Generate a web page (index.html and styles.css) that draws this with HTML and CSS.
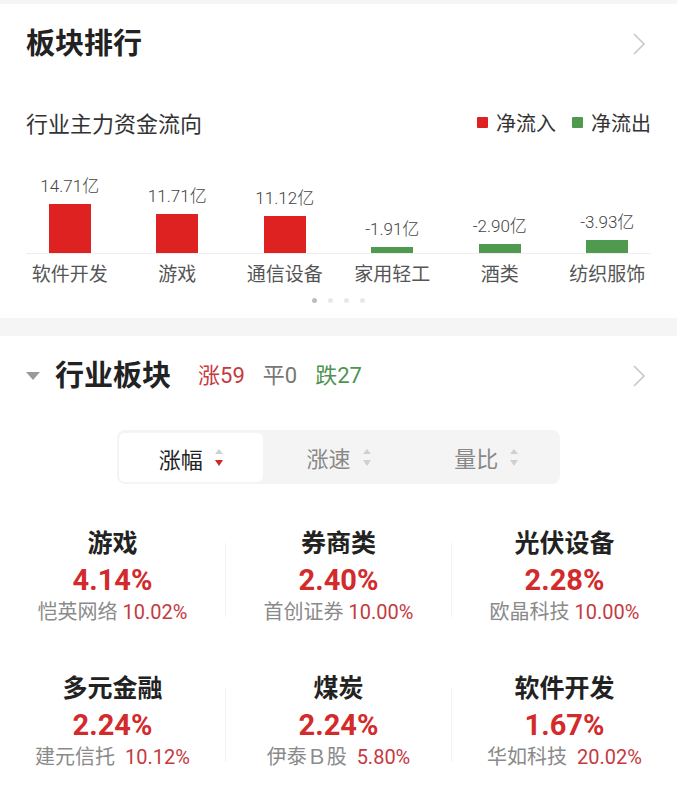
FILE: index.html
```html
<!DOCTYPE html>
<html lang="zh-CN">
<head>
  <meta charset="UTF-8">
  <meta name="viewport" content="width=device-width, initial-scale=1.0">
  <title>板块排行</title>
  <link rel="stylesheet" href="styles.css">
</head>
<body>
  <section class="card rank">
    <div class="card-head">
      <h1 class="title">板块排行</h1>
      <svg class="chevron" width="14" height="24" viewBox="0 0 14 24"><path d="M2 2l10 10-10 10" fill="none" stroke="#c8c8c8" stroke-width="1.6"/></svg>
    </div>

    <div class="flow-head">
      <span class="flow-title">行业主力资金流向</span>
      <div class="legend">
        <span class="legend-item"><i class="swatch red"></i>净流入</span>
        <span class="legend-item"><i class="swatch green"></i>净流出</span>
      </div>
    </div>

    <div class="chart">
      <div class="bars">
        <div class="col"><span class="val">14.71亿</span><i class="bar red" style="height: 49px"></i></div>
        <div class="col"><span class="val">11.71亿</span><i class="bar red" style="height: 39px"></i></div>
        <div class="col"><span class="val">11.12亿</span><i class="bar red" style="height: 37px"></i></div>
        <div class="col"><span class="val">-1.91亿</span><i class="bar green" style="height: 6px"></i></div>
        <div class="col"><span class="val">-2.90亿</span><i class="bar green" style="height: 9px"></i></div>
        <div class="col"><span class="val">-3.93亿</span><i class="bar green" style="height: 13px"></i></div>
      </div>
      <div class="names">
        <span>软件开发</span>
        <span>游戏</span>
        <span>通信设备</span>
        <span>家用轻工</span>
        <span>酒类</span>
        <span>纺织服饰</span>
      </div>
    </div>

    <div class="dots">
      <i class="dot on"></i><i class="dot"></i><i class="dot"></i><i class="dot"></i>
    </div>
  </section>

  <section class="card sectors">
    <div class="card-head">
      <i class="caret"></i>
      <h2 class="title">行业板块</h2>
      <span class="stat up">涨59</span>
      <span class="stat flat">平0</span>
      <span class="stat down">跌27</span>
      <svg class="chevron" width="14" height="24" viewBox="0 0 14 24"><path d="M2 2l10 10-10 10" fill="none" stroke="#c8c8c8" stroke-width="1.6"/></svg>
    </div>

    <div class="tabs">
      <div class="tab active">涨幅
        <svg class="sort" width="8" height="17" viewBox="0 0 8 17"><polygon points="0,5 4,0 8,5" fill="#d0d0d0"/><polygon points="0,11 8,11 4,17" fill="#d42525"/></svg>
      </div>
      <div class="tab">涨速
        <svg class="sort" width="8" height="17" viewBox="0 0 8 17"><polygon points="0,5 4,0 8,5" fill="#d0d0d0"/><polygon points="0,11 8,11 4,17" fill="#d0d0d0"/></svg>
      </div>
      <div class="tab">量比
        <svg class="sort" width="8" height="17" viewBox="0 0 8 17"><polygon points="0,5 4,0 8,5" fill="#d0d0d0"/><polygon points="0,11 8,11 4,17" fill="#d0d0d0"/></svg>
      </div>
    </div>

    <div class="grid">
      <div class="row">
        <div class="cell">
          <div class="name">游戏</div>
          <div class="pct">4.14%</div>
          <div class="lead">恺英网络 <span>10.02%</span></div>
        </div>
        <i class="vline"></i>
        <div class="cell">
          <div class="name">券商类</div>
          <div class="pct">2.40%</div>
          <div class="lead">首创证券 <span>10.00%</span></div>
        </div>
        <i class="vline"></i>
        <div class="cell">
          <div class="name">光伏设备</div>
          <div class="pct">2.28%</div>
          <div class="lead">欧晶科技 <span>10.00%</span></div>
        </div>
      </div>
      <div class="row">
        <div class="cell">
          <div class="name">多元金融</div>
          <div class="pct">2.24%</div>
          <div class="lead">建元信托  <span>10.12%</span></div>
        </div>
        <i class="vline"></i>
        <div class="cell">
          <div class="name">煤炭</div>
          <div class="pct">2.24%</div>
          <div class="lead">伊泰Ｂ股  <span>5.80%</span></div>
        </div>
        <i class="vline"></i>
        <div class="cell">
          <div class="name">软件开发</div>
          <div class="pct">1.67%</div>
          <div class="lead">华如科技  <span>20.02%</span></div>
        </div>
      </div>
    </div>
  </section>
</body>
</html>
```

FILE: styles.css
```css
body {
  margin: 0;
  background: #f5f5f5;
  font-family: Roboto, "Noto Sans CJK SC", sans-serif;
  color: #333;
}
.card {
  background: #fff;
  padding: 22px 0 15px;
}
.rank {
  margin-top: 4px;
}
.sectors {
  margin-top: 18px;
  padding-bottom: 30px;
}
.card-head {
  display: flex;
  align-items: center;
  height: 36px;
  padding: 0 31px 0 26px;
}
.title {
  margin: 0;
  font-size: 29px;
  line-height: 36px;
  font-weight: 700;
  color: #222;
}
.chevron {
  margin-left: auto;
}
.flow-head {
  display: flex;
  align-items: center;
  height: 30px;
  margin-top: 45px;
  padding: 0 26px;
}
.flow-title {
  font-size: 22px;
  color: #333;
}
.legend {
  display: flex;
  gap: 16px;
  margin-left: auto;
}
.legend-item {
  display: flex;
  align-items: center;
  gap: 8px;
  font-size: 20px;
  color: #333;
}
.swatch {
  width: 11px;
  height: 11px;
  border-radius: 1px;
}
.red {
  background: #de2222;
}
.green {
  background: #4f9a4f;
}
.chart {
  margin-top: 38px;
  padding: 0 16px;
}
/* baseline is 10px shorter than the columns on each side */
.bars {
  display: grid;
  grid-template-columns: repeat(6, 1fr);
  align-items: end;
  padding-bottom: 1px;
  background: linear-gradient(#eeeeee, #eeeeee) center bottom / calc(100% - 20px) 1px no-repeat;
}
.bars .col {
  display: flex;
  flex-direction: column;
  align-items: center;
}
.val {
  height: 22px;
  line-height: 22px;
  margin-bottom: 7px;
  font-size: 17px;
  font-weight: 300;
  color: #444;
  white-space: nowrap;
}
.bar {
  display: block;
  width: 42px;
}
.names {
  display: grid;
  grid-template-columns: repeat(6, 1fr);
  margin-top: 8px;
  height: 26px;
  line-height: 26px;
  font-size: 19px;
  color: #555;
  text-align: center;
}
.dots {
  display: flex;
  justify-content: center;
  gap: 11px;
  margin-top: 10px;
}
.dot {
  width: 5px;
  height: 5px;
  border-radius: 50%;
  background: #e8e8e8;
}
.dot.on {
  background: #bdbdbd;
}
.caret {
  width: 0;
  height: 0;
  border-left: 7px solid transparent;
  border-right: 7px solid transparent;
  border-top: 8px solid #9a9a9a;
  margin-right: 15px;
}
.stat {
  font-size: 22px;
  line-height: 36px;
  height: 36px;
  margin-left: 18px;
}
.stat.up {
  margin-left: 27px;
  color: #c43a3e;
}
.stat.flat {
  color: #777;
}
.stat.down {
  color: #4f9452;
}
.tabs {
  display: grid;
  grid-template-columns: repeat(3, 1fr);
  width: 443px;
  height: 54px;
  margin: 36px auto 0;
  background: #f4f4f4;
  border-radius: 8px;
}
.tab {
  display: flex;
  align-items: center;
  justify-content: center;
  gap: 12px;
  font-size: 22px;
  color: #888;
}
.tab.active {
  margin: 3px 2px 2px 2px;
  background: #fff;
  border-radius: 6px;
  color: #222;
}
.grid {
  margin-top: 43px;
}
.row {
  display: flex;
}
.row + .row {
  margin-top: 47px;
}
.cell {
  flex: 1;
  text-align: center;
}
.vline {
  width: 1px;
  height: 74px;
  margin-top: 16px;
  background: #f2f2f2;
}
.name {
  height: 34px;
  line-height: 34px;
  font-size: 25px;
  font-weight: 700;
  color: #222;
}
.pct {
  height: 38px;
  line-height: 38px;
  font-size: 29px;
  font-weight: 700;
  color: #d32a2c;
}
.lead {
  height: 26px;
  line-height: 26px;
  font-size: 20px;
  color: #8a8a8a;
  white-space: pre;
}
.lead span {
  color: #c53a3f;
}
```
